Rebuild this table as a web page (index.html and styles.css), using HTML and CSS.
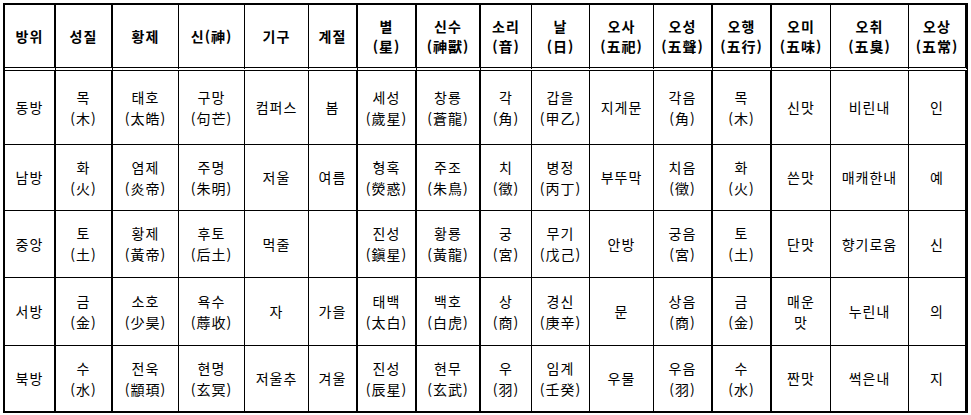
FILE: index.html
```html
<!DOCTYPE html>
<html lang="ko">
<head>
<meta charset="utf-8">
<title>오방 대응표</title>
<link rel="stylesheet" href="styles.css">
</head>
<body>
<div class="table">
  <div class="row head">
    <div><span>방위</span></div>
    <div><span>성질</span></div>
    <div><span>황제</span></div>
    <div><span>신(神)</span></div>
    <div><span>기구</span></div>
    <div><span>계절</span></div>
    <div><span>별</span><span>(星)</span></div>
    <div><span>신수</span><span>(神獸)</span></div>
    <div><span>소리</span><span>(音)</span></div>
    <div><span>날</span><span>(日)</span></div>
    <div><span>오사</span><span>(五祀)</span></div>
    <div><span>오성</span><span>(五聲)</span></div>
    <div><span>오행</span><span>(五行)</span></div>
    <div><span>오미</span><span>(五味)</span></div>
    <div><span>오취</span><span>(五臭)</span></div>
    <div><span>오상</span><span>(五常)</span></div>
  </div>
  <div class="row r1">
    <div><span>동방</span></div>
    <div><span>목</span><span>(木)</span></div>
    <div><span>태호</span><span>(太皓)</span></div>
    <div><span>구망</span><span>(句芒)</span></div>
    <div><span>컴퍼스</span></div>
    <div><span>봄</span></div>
    <div><span>세성</span><span>(歲星)</span></div>
    <div><span>창룡</span><span>(蒼龍)</span></div>
    <div><span>각</span><span>(角)</span></div>
    <div><span>갑을</span><span>(甲乙)</span></div>
    <div><span>지게문</span></div>
    <div><span>각음</span><span>(角)</span></div>
    <div><span>목</span><span>(木)</span></div>
    <div><span>신맛</span></div>
    <div><span>비린내</span></div>
    <div><span>인</span></div>
  </div>
  <div class="row r2">
    <div><span>남방</span></div>
    <div><span>화</span><span>(火)</span></div>
    <div><span>염제</span><span>(炎帝)</span></div>
    <div><span>주명</span><span>(朱明)</span></div>
    <div><span>저울</span></div>
    <div><span>여름</span></div>
    <div><span>형혹</span><span>(熒惑)</span></div>
    <div><span>주조</span><span>(朱鳥)</span></div>
    <div><span>치</span><span>(徵)</span></div>
    <div><span>병정</span><span>(丙丁)</span></div>
    <div><span>부뚜막</span></div>
    <div><span>치음</span><span>(徵)</span></div>
    <div><span>화</span><span>(火)</span></div>
    <div><span>쓴맛</span></div>
    <div><span>매캐한내</span></div>
    <div><span>예</span></div>
  </div>
  <div class="row r3">
    <div><span>중앙</span></div>
    <div><span>토</span><span>(土)</span></div>
    <div><span>황제</span><span>(黃帝)</span></div>
    <div><span>후토</span><span>(后土)</span></div>
    <div><span>먹줄</span></div>
    <div></div>
    <div><span>진성</span><span>(鎭星)</span></div>
    <div><span>황룡</span><span>(黃龍)</span></div>
    <div><span>궁</span><span>(宮)</span></div>
    <div><span>무기</span><span>(戊己)</span></div>
    <div><span>안방</span></div>
    <div><span>궁음</span><span>(宮)</span></div>
    <div><span>토</span><span>(土)</span></div>
    <div><span>단맛</span></div>
    <div><span>향기로움</span></div>
    <div><span>신</span></div>
  </div>
  <div class="row r4">
    <div><span>서방</span></div>
    <div><span>금</span><span>(金)</span></div>
    <div><span>소호</span><span>(少昊)</span></div>
    <div><span>욕수</span><span>(蓐收)</span></div>
    <div><span>자</span></div>
    <div><span>가을</span></div>
    <div><span>태백</span><span>(太白)</span></div>
    <div><span>백호</span><span>(白虎)</span></div>
    <div><span>상</span><span>(商)</span></div>
    <div><span>경신</span><span>(庚辛)</span></div>
    <div><span>문</span></div>
    <div><span>상음</span><span>(商)</span></div>
    <div><span>금</span><span>(金)</span></div>
    <div><span>매운</span><span>맛</span></div>
    <div><span>누린내</span></div>
    <div><span>의</span></div>
  </div>
  <div class="row r5">
    <div><span>북방</span></div>
    <div><span>수</span><span>(水)</span></div>
    <div><span>전욱</span><span>(顓頊)</span></div>
    <div><span>현명</span><span>(玄冥)</span></div>
    <div><span>저울추</span></div>
    <div><span>겨울</span></div>
    <div><span>진성</span><span>(辰星)</span></div>
    <div><span>현무</span><span>(玄武)</span></div>
    <div><span>우</span><span>(羽)</span></div>
    <div><span>임계</span><span>(壬癸)</span></div>
    <div><span>우물</span></div>
    <div><span>우음</span><span>(羽)</span></div>
    <div><span>수</span><span>(水)</span></div>
    <div><span>짠맛</span></div>
    <div><span>썩은내</span></div>
    <div><span>지</span></div>
  </div>
</div>
</body>
</html>
```

FILE: styles.css
```css
html, body {
  margin: 0;
  padding: 0;
  background: #fff;
}

body {
  padding: 3px 0 0 3px;
  font-family: "Noto Sans CJK KR", "Noto Sans", sans-serif;
  color: #000;
  font-size: 14px;
  line-height: 21px;
}

.table {
  width: fit-content;
  border-left: 2px solid #000;
  border-top: 2px solid #000;
}

.row {
  display: grid;
  grid-template-columns: 51px 57px 66px 66px 64px 49px 59px 64px 51px 58px 64px 59px 59px 59px 78px 59px;
}

.row > div {
  box-sizing: border-box;
  display: flex;
  flex-direction: column;
  align-items: center;
  justify-content: center;
  text-align: center;
  border-right: 1px solid #000;
  border-bottom: 1px solid #000;
  white-space: nowrap;
  letter-spacing: 1px;
}

.row > div:nth-child(1),
.row > div:nth-child(2),
.row > div:nth-child(6),
.row > div:nth-child(7),
.row > div:nth-child(8),
.row > div:nth-child(12),
.row > div:nth-child(13) {
  border-right-width: 2px;
}

.row > div:nth-child(16) {
  border-right-width: 3px;
}

.head {
  height: 66px;
  font-size: 14px;
  font-weight: 700;
  line-height: 20px;
}

.head > div {
  border-bottom: 4px double #000;
}

.r1 { height: 74px; }
.r2 { height: 66px; }
.r3 { height: 67px; }
.r4 { height: 68px; }
.r5 { height: 67px; }

.r5 > div {
  border-bottom-width: 2px;
}
```
